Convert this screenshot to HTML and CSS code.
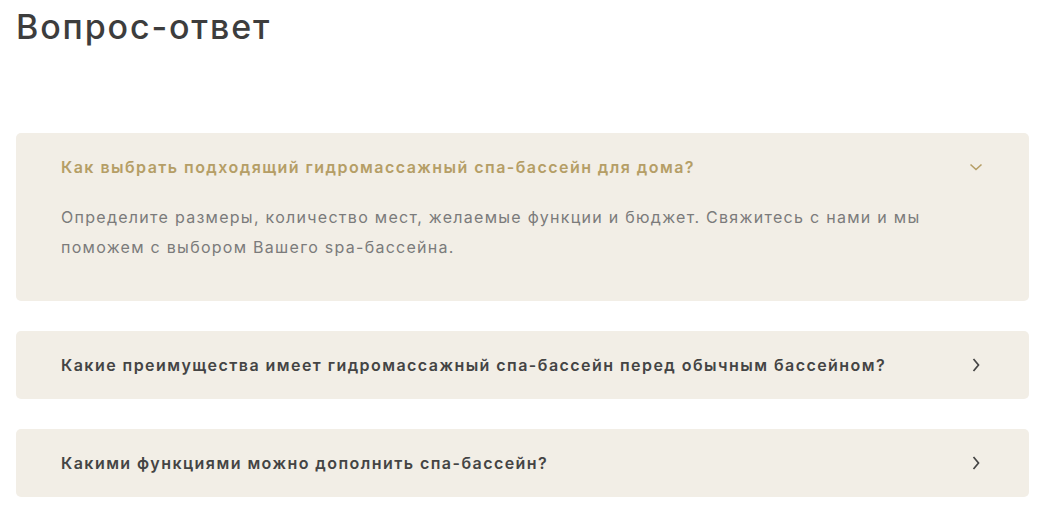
FILE: index.html
```html
<!DOCTYPE html>
<html lang="ru">
<head>
<meta charset="utf-8">
<title>Вопрос-ответ</title>
<link rel="stylesheet" href="styles.css">
</head>
<body>
<section class="faq">
  <h2 class="faq__title">Вопрос-ответ</h2>
  <div class="faq__list">
    <div class="faq__item faq__item--open">
      <div class="faq__question">
        <span>Как выбрать подходящий гидромассажный спа-бассейн для дома?</span>
        <svg class="faq__icon" width="16" height="16" viewBox="0 0 16 16" aria-hidden="true"><path d="M2.5 5.5 L8 10.5 L13.5 5.5" fill="none" stroke="currentColor" stroke-width="1.6"/></svg>
      </div>
      <p class="faq__answer">Определите размеры, количество мест, желаемые функции и бюджет. Свяжитесь с нами и мы поможем с выбором Вашего spa-бассейна.</p>
    </div>
    <div class="faq__item">
      <div class="faq__question">
        <span>Какие преимущества имеет гидромассажный спа-бассейн перед обычным бассейном?</span>
        <svg class="faq__icon" width="16" height="16" viewBox="0 0 16 16" aria-hidden="true"><path d="M5.5 2 L10.5 8 L5.5 14" fill="none" stroke="currentColor" stroke-width="1.7"/></svg>
      </div>
    </div>
    <div class="faq__item">
      <div class="faq__question">
        <span>Какими функциями можно дополнить спа-бассейн?</span>
        <svg class="faq__icon" width="16" height="16" viewBox="0 0 16 16" aria-hidden="true"><path d="M5.5 2 L10.5 8 L5.5 14" fill="none" stroke="currentColor" stroke-width="1.7"/></svg>
      </div>
    </div>
  </div>
</section>
</body>
</html>
```
FILE: styles.css
```css
* { box-sizing: border-box; }

body {
  margin: 0;
  background: #ffffff;
  font-family: "Inter", "Noto Sans", sans-serif;
  color: #444444;
}

.faq {
  padding: 0 18px 0 16px;
}

.faq__title {
  margin: 0;
  padding-top: 6px;
  font-size: 34px;
  line-height: 42px;
  font-weight: 500;
  color: #3d3d3d;
  letter-spacing: 1.85px;
}

.faq__list {
  margin-top: 85px;
  display: flex;
  flex-direction: column;
  gap: 30px;
}

.faq__item {
  background: #f2eee6;
  border-radius: 5px;
  padding: 23px 45px;
}

.faq__item--open {
  padding-bottom: 39px;
}

.faq__question {
  display: flex;
  align-items: center;
  justify-content: space-between;
  font-size: 16px;
  line-height: 22px;
  font-weight: 600;
  color: #444444;
  letter-spacing: 1.45px;
}

.faq__item--open .faq__question {
  color: #b59e66;
}

.faq__icon {
  flex: none;
  color: #444444;
}

.faq__item--open .faq__icon {
  color: #b59e66;
}

.faq__answer {
  margin: 24px 0 0;
  max-width: 900px;
  font-size: 16px;
  line-height: 30px;
  font-weight: 400;
  color: #7b7b7b;
  letter-spacing: 1.28px;
}
```
